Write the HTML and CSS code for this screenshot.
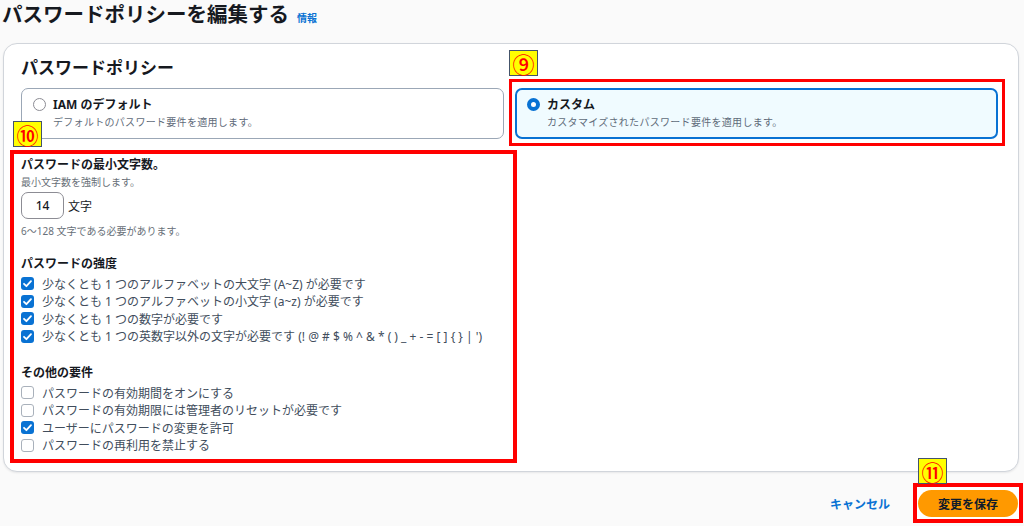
FILE: index.html
```html
<!DOCTYPE html>
<html lang="ja">
<head>
<meta charset="utf-8">
<title>パスワードポリシーを編集する</title>
<link rel="stylesheet" href="styles.css">
</head>
<body>
<header class="page-head">
  <h1 class="title">パスワードポリシーを編集する</h1>
  <a class="info" href="#">情報</a>
</header>

<section class="panel">
  <h2 class="panel-title">パスワードポリシー</h2>
  <div class="tiles">
    <label class="tile">
      <span class="radio"></span>
      <span class="tile-text">
        <span class="tile-label">IAM のデフォルト</span>
        <span class="tile-desc">デフォルトのパスワード要件を適用します。</span>
      </span>
    </label>
    <label class="tile tile-selected">
      <span class="radio radio-on"></span>
      <span class="tile-text">
        <span class="tile-label">カスタム</span>
        <span class="tile-desc">カスタマイズされたパスワード要件を適用します。</span>
      </span>
      <span class="mark mark-9"></span>
      <span class="badge badge-9">⑨</span>
    </label>
  </div>

  <div class="settings">
    <span class="mark mark-10"></span>
    <span class="badge badge-10">⑩</span>

    <h3 class="field-title">パスワードの最小文字数。</h3>
    <p class="desc">最小文字数を強制します。</p>
    <div class="input-row">
      <span class="input">14</span>
      <span class="unit">文字</span>
    </div>
    <p class="desc hint">6〜128 文字である必要があります。</p>

    <h3 class="field-title group-title">パスワードの強度</h3>
    <ul class="checks">
      <li class="check-row"><span class="box box-on"><svg viewBox="0 0 13 13"><path d="M3 6.8l2.4 2.4L10 4.2"/></svg></span>少なくとも 1 つのアルファベットの大文字 (A~Z) が必要です</li>
      <li class="check-row"><span class="box box-on"><svg viewBox="0 0 13 13"><path d="M3 6.8l2.4 2.4L10 4.2"/></svg></span>少なくとも 1 つのアルファベットの小文字 (a~z) が必要です</li>
      <li class="check-row"><span class="box box-on"><svg viewBox="0 0 13 13"><path d="M3 6.8l2.4 2.4L10 4.2"/></svg></span>少なくとも 1 つの数字が必要です</li>
      <li class="check-row"><span class="box box-on"><svg viewBox="0 0 13 13"><path d="M3 6.8l2.4 2.4L10 4.2"/></svg></span>少なくとも 1 つの英数字以外の文字が必要です (! @ # $ % ^ &amp; * ( ) _ + - = [ ] { } | ')</li>
    </ul>

    <h3 class="field-title group-title other-title">その他の要件</h3>
    <ul class="checks">
      <li class="check-row"><span class="box"></span>パスワードの有効期間をオンにする</li>
      <li class="check-row"><span class="box"></span>パスワードの有効期限には管理者のリセットが必要です</li>
      <li class="check-row"><span class="box box-on"><svg viewBox="0 0 13 13"><path d="M3 6.8l2.4 2.4L10 4.2"/></svg></span>ユーザーにパスワードの変更を許可</li>
      <li class="check-row"><span class="box"></span>パスワードの再利用を禁止する</li>
    </ul>
  </div>
</section>

<footer class="actions">
  <a class="cancel" href="#">キャンセル</a>
  <span class="save-wrap">
    <span class="badge badge-11">⑪</span>
    <button class="save" type="button">変更を保存</button>
  </span>
</footer>
</body>
</html>
```

FILE: styles.css
```css
* { box-sizing: border-box; }

html, body {
  margin: 0;
  padding: 0;
  background: #fafafa;
}

body {
  width: 1024px;
  height: 526px;
  overflow: hidden;
  font-family: "Noto Sans", "Noto Sans CJK JP", sans-serif;
  color: #16191f;
}

h1, h2, h3, p, ul { margin: 0; padding: 0; }
ul { list-style: none; }
a { text-decoration: none; }

/* header */
.page-head {
  display: flex;
  align-items: baseline;
  height: 43px;
  padding-left: 2px;
}

.title {
  font-family: "Noto Sans CJK JP", sans-serif;
  font-size: 20.5px;
  line-height: 26px;
  font-weight: 700;
  color: #16191f;
}

.info {
  margin-left: 8px;
  font-family: "Noto Sans CJK JP", sans-serif;
  font-size: 10px;
  font-weight: 700;
  color: #0972d3;
}

/* panel */
.panel {
  margin: 0 5px 0 3px;
  height: 429px;
  background: #ffffff;
  border: 1px solid #d1d5db;
  border-radius: 14px;
  box-shadow: 0 1px 2px rgba(0, 7, 22, 0.08);
  padding: 12px 20px 0 17px;
}

.panel-title {
  font-family: "Noto Sans CJK JP", sans-serif;
  font-size: 17px;
  line-height: 22px;
  font-weight: 700;
  color: #16191f;
}

.tiles {
  display: grid;
  grid-template-columns: 1fr 1fr;
  column-gap: 11px;
  margin-top: 10px;
}

.tile {
  position: relative;
  display: flex;
  align-items: flex-start;
  height: 51px;
  padding: 8px 11px 0 11px;
  border: 1px solid #9ba7b6;
  border-radius: 7px;
  background: #ffffff;
}

.tile-selected {
  border: 2px solid #0972d3;
  background: #f0fbff;
  padding: 7px 10px 0 10px;
}

.radio {
  flex: none;
  width: 13px;
  height: 13px;
  margin-top: 1px;
  border: 1.5px solid #8c8c94;
  border-radius: 50%;
  background: #fff;
}

.radio-on {
  border: 4px solid #0972d3;
}

.tile-text {
  display: flex;
  flex-direction: column;
  margin-left: 7px;
}

.tile-label {
  font-family: "Noto Sans", "Noto Sans CJK JP", sans-serif;
  font-size: 12px;
  line-height: 16px;
  font-weight: 700;
  color: #16191f;
}

.tile-desc {
  margin-top: 2px;
  font-family: "Noto Sans CJK JP", sans-serif;
  font-size: 10px;
  line-height: 14px;
  color: #5f6b7a;
  letter-spacing: 0.3px;
}

/* settings */
.settings {
  position: relative;
  width: 490px;
  margin-top: 18px;
}

.field-title {
  font-family: "Noto Sans", "Noto Sans CJK JP", sans-serif;
  font-size: 12px;
  line-height: 16px;
  font-weight: 700;
  color: #16191f;
}

.desc {
  margin-top: 2px;
  font-family: "Noto Sans", "Noto Sans CJK JP", sans-serif;
  font-size: 10px;
  line-height: 14px;
  color: #687078;
}

.input-row {
  display: flex;
  align-items: center;
  margin-top: 3px;
}

.input {
  display: flex;
  align-items: center;
  justify-content: center;
  width: 43px;
  height: 27px;
  border: 1px solid #8c8c94;
  border-radius: 7px;
  font-size: 12px;
  font-weight: 500;
  color: #16191f;
}

.unit {
  margin-left: 4px;
  font-family: "Noto Sans CJK JP", sans-serif;
  font-size: 12px;
  color: #16191f;
}

.hint { margin-top: 5px; }

.group-title { margin-top: 18px; }
.other-title { margin-top: 19.75px; }

.checks { margin-top: 3px; }

.check-row {
  display: flex;
  align-items: center;
  height: 17.5px;
  font-family: "Noto Sans", "Noto Sans CJK JP", sans-serif;
  font-size: 12px;
  color: #414d5c;
  white-space: nowrap;
}

.box {
  flex: none;
  width: 13px;
  height: 13px;
  margin-right: 8px;
  border: 1px solid #a9b1bb;
  border-radius: 3px;
  background: #fff;
}

.box-on {
  border: none;
  background: #0972d3;
}

.box svg {
  display: block;
  width: 13px;
  height: 13px;
}

.box svg path {
  fill: none;
  stroke: #ffffff;
  stroke-width: 1.8;
  stroke-linecap: round;
  stroke-linejoin: round;
}

/* annotation overlays */
.mark {
  position: absolute;
  border: 4px solid #ff0000;
  pointer-events: none;
}

.mark-9 {
  top: -11px;
  left: -8px;
  right: -9px;
  bottom: -9px;
  border-width: 3.5px;
}

.mark-10 {
  top: -7px;
  left: -11px;
  right: -6px;
  bottom: -9px;
}

.badge {
  position: absolute;
  display: flex;
  align-items: center;
  justify-content: center;
  width: 29px;
  height: 26px;
  background: #ffff00;
  border: 1.5px solid #44546a;
  color: #ff0000;
  font-family: "Noto Sans CJK JP", sans-serif;
  font-size: 22px;
  font-weight: 500;
  line-height: 1;
}

.badge-9 { top: -40px; left: -8px; }
.badge-10 { top: -36px; left: -8px; }
.badge-11 { top: -29px; left: 1px; }

/* footer */
.actions {
  display: flex;
  justify-content: flex-end;
  align-items: center;
  gap: 23px;
  margin-top: 11px;
  padding-right: 1px;
}

.cancel {
  font-family: "Noto Sans CJK JP", sans-serif;
  font-size: 12px;
  font-weight: 700;
  color: #0972d3;
}

.save-wrap {
  position: relative;
  display: block;
  border: 4px solid #ff0000;
  padding: 3px 1px 2px 1px;
  background: #fff;
}

.save {
  display: block;
  width: 100px;
  height: 27px;
  border: none;
  border-radius: 14px;
  background: #ff9900;
  color: #0f1b2a;
  font-family: "Noto Sans CJK JP", sans-serif;
  font-size: 12px;
  font-weight: 700;
  padding: 0;
}
```
